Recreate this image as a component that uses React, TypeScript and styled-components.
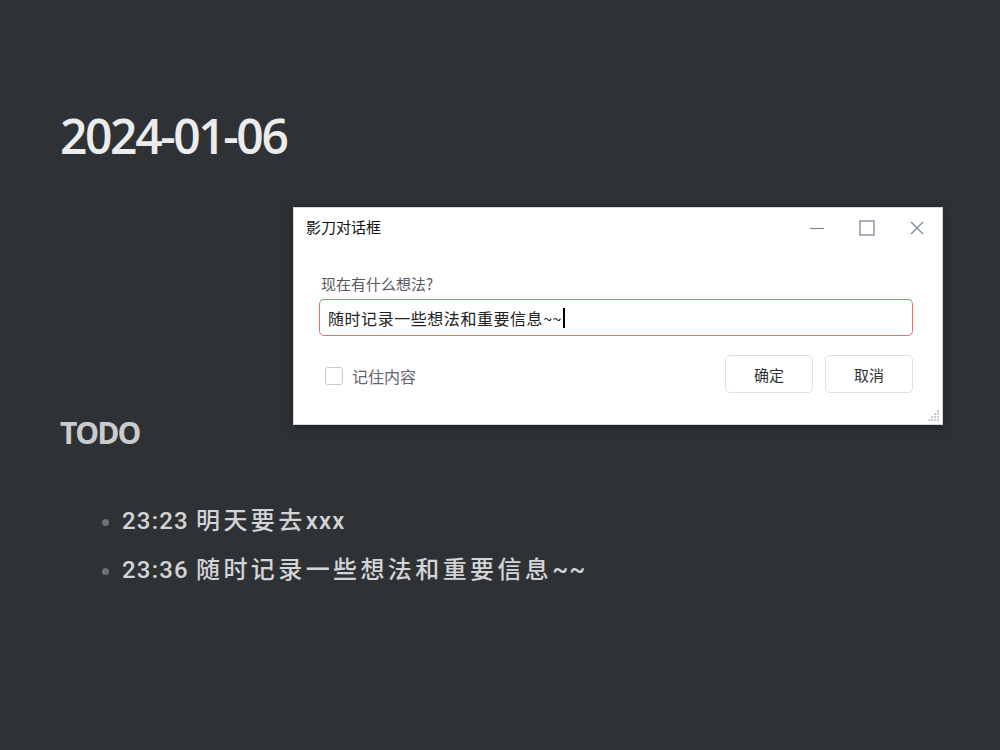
import React from "react";
import styled, { createGlobalStyle } from "styled-components";

const Global = createGlobalStyle`
  html, body { margin: 0; padding: 0; background: #2e3235; }
  body { font-family: "Noto Sans", "Noto Sans CJK SC", sans-serif; }
`;

const Page = styled.div`
  position: relative;
  width: 1000px;
  height: 750px;
  background: #2e3235;
  overflow: hidden;
  padding: 106px 0 0 60px;
  box-sizing: border-box;
`;

const DateTitle = styled.h1`
  margin: 0;
  font-family: "Open Sans", "Noto Sans", sans-serif;
  font-weight: 650;
  font-size: 48px;
  line-height: 60px;
  letter-spacing: -2.4px;
  color: #ececec;
`;

const Section = styled.h2`
  margin: 247px 0 0 0;
  font-family: "Open Sans", "Noto Sans", sans-serif;
  font-weight: 700;
  font-size: 30px;
  line-height: 40px;
  letter-spacing: -2px;
  color: #c9cbcd;
`;

const List = styled.ul`
  margin: 52px 0 0 0;
  padding: 0 0 0 62px;
  list-style: none;
  display: flex;
  flex-direction: column;
  gap: 17px;
`;

const Item = styled.li`
  position: relative;
  font-family: Roboto, "Noto Sans CJK SC", sans-serif;
  font-weight: 500;
  font-size: 24px;
  line-height: 32px;
  letter-spacing: 1.2px;
  color: #d2d4d6;
  &::before {
    content: "";
    position: absolute;
    left: -20px;
    top: 14px;
    width: 7px;
    height: 7px;
    border-radius: 50%;
    background: #6e7377;
  }
`;

const Cjk = styled.span`
  letter-spacing: 3.4px;
`;

const Dialog = styled.div`
  position: absolute;
  left: 293px;
  top: 207px;
  width: 650px;
  height: 218px;
  box-sizing: border-box;
  background: #fff;
  border: 1px solid #d8d8d8;
  box-shadow: 0 2px 10px rgba(0, 0, 0, 0.35);
  display: flex;
  flex-direction: column;
  font-family: "Noto Sans CJK SC", "Noto Sans", sans-serif;
`;

const TitleBar = styled.div`
  height: 40px;
  display: flex;
  align-items: center;
  padding-left: 12px;
`;

const Title = styled.div`
  flex: 1;
  font-size: 15px;
  color: #111;
  margin-top: -3px;
`;

const WinBtn = styled.div`
  width: 50px;
  height: 40px;
  display: flex;
  align-items: center;
  justify-content: center;
  color: #7c879a;
`;

const Body = styled.div`
  padding: 26px 29px 0 25px;
  display: flex;
  flex-direction: column;
`;

const Label = styled.div`
  font-size: 15px;
  line-height: 20px;
  color: #555a60;
  padding-left: 2px;
`;

const Input = styled.div`
  margin-top: 5px;
  height: 37px;
  box-sizing: border-box;
  border: 1px solid #f56c6c;
  border-radius: 5px;
  padding: 0 8px;
  display: flex;
  align-items: center;
  font-size: 16px;
  letter-spacing: 0.55px;
  color: #222;
`;

const Caret = styled.span`
  display: inline-block;
  width: 2px;
  height: 20px;
  background: #000;
  margin-left: 1px;
`;

const Footer = styled.div`
  margin-top: 19px;
  display: flex;
  align-items: center;
`;

const Check = styled.label`
  flex: 1;
  display: flex;
  align-items: center;
  gap: 9px;
  padding-left: 6px;
  font-size: 16px;
  color: #5f6670;
  transform: translateY(2px);
`;

const Box = styled.span`
  width: 16px;
  height: 16px;
  border: 1px solid #c6cad1;
  border-radius: 3px;
`;

const Button = styled.button`
  width: 88px;
  height: 38px;
  margin-left: 12px;
  background: #fff;
  border: 1px solid #dcdfe6;
  border-radius: 5px;
  font-family: "Noto Sans CJK SC", sans-serif;
  font-size: 15px;
  color: #303133;
`;

const Grip = styled.svg`
  position: absolute;
  right: 2px;
  bottom: 2px;
`;

export default function App() {
  return (
    <>
      <Global />
      <Page>
        <DateTitle>2024-01-06</DateTitle>
        <Section>TODO</Section>
        <List>
          <Item>
            23:23 <Cjk>明天要去</Cjk>xxx
          </Item>
          <Item>
            23:36 <Cjk>随时记录一些想法和重要信息</Cjk>~~
          </Item>
        </List>
        <Dialog>
          <TitleBar>
            <Title>影刀对话框</Title>
            <WinBtn>
              <svg width="14" height="14" viewBox="0 0 14 14">
                <line x1="0" y1="7.5" x2="14" y2="7.5" stroke="currentColor" strokeWidth="1.2" />
              </svg>
            </WinBtn>
            <WinBtn>
              <svg width="16" height="16" viewBox="0 0 16 16">
                <rect x="1" y="1" width="14" height="14" fill="none" stroke="currentColor" strokeWidth="1.3" />
              </svg>
            </WinBtn>
            <WinBtn>
              <svg width="14" height="14" viewBox="0 0 14 14">
                <path d="M1 1 L13 13 M13 1 L1 13" stroke="currentColor" strokeWidth="1.2" />
              </svg>
            </WinBtn>
          </TitleBar>
          <Body>
            <Label>现在有什么想法?</Label>
            <Input>
              随时记录一些想法和重要信息~~<Caret />
            </Input>
            <Footer>
              <Check>
                <Box />
                记住内容
              </Check>
              <Button>确定</Button>
              <Button>取消</Button>
            </Footer>
          </Body>
          <Grip width="14" height="14" viewBox="0 0 14 14">
            {[
              [11, 2], [11, 5], [8, 5], [11, 8], [8, 8], [5, 8], [11, 11], [8, 11], [5, 11], [2, 11],
            ].map(([x, y], i) => (
              <rect key={i} x={x} y={y} width="2" height="2" fill="#c5cad3" />
            ))}
          </Grip>
        </Dialog>
      </Page>
    </>
  );
}
